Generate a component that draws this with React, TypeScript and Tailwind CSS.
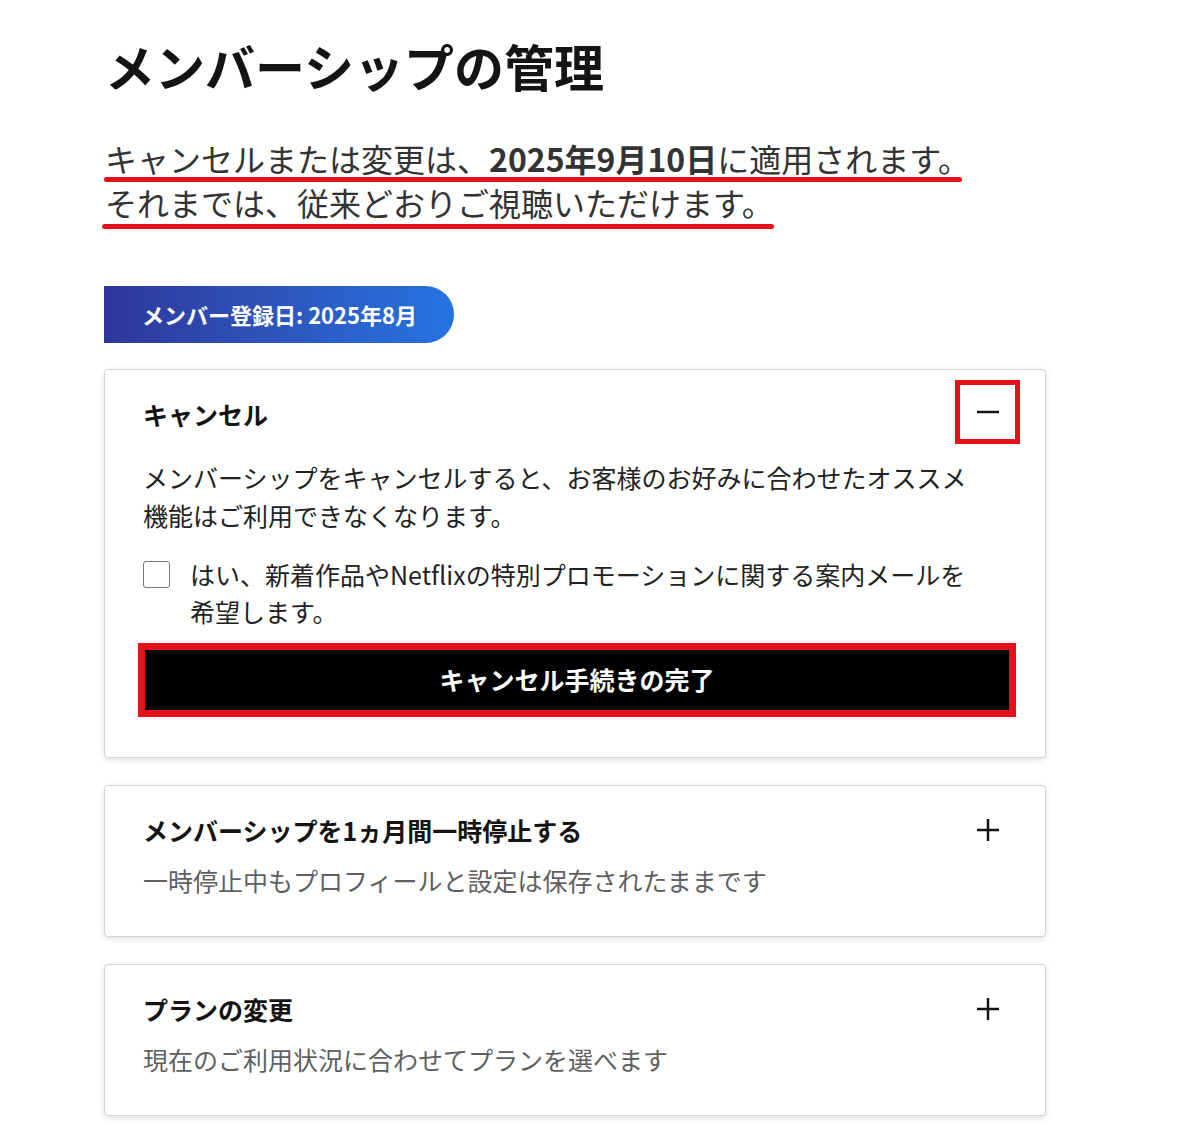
import React, { useState } from 'react';

// ==================== ICONS ====================
const PlusIcon = () => (
  <svg width="24" height="24" viewBox="0 0 24 24" fill="none">
    <path d="M12 1v22M1 12h22" stroke="#141414" strokeWidth="2.5" />
  </svg>
);

const MinusIcon = () => (
  <svg width="24" height="24" viewBox="0 0 24 24" fill="none">
    <path d="M1 12h22" stroke="#141414" strokeWidth="2.5" />
  </svg>
);

// ==================== OPTION CARD ====================
const OptionCard = ({ title, description }: { title: string; description: string }) => {
  return (
    <div className="border border-[#d4d4d4] rounded-[4px] bg-white shadow-[0_2px_6px_rgba(0,0,0,0.12)] pl-[38px] pr-[45px] pt-[26px] pb-[38px]">
      <div className="flex items-center justify-between">
        <h3 className="text-[25px] leading-[36px] font-bold text-[#141414]">{title}</h3>
        <PlusIcon />
      </div>
      <p className="mt-[14px] text-[25px] leading-[36px] text-[#5f5f5f]">{description}</p>
    </div>
  );
};

// ==================== MAIN COMPONENT ====================
export default function App() {
  const [wantsMail, setWantsMail] = useState(false);

  return (
    <div className="min-h-screen bg-white font-['Noto_Sans_CJK_JP','Noto_Sans',sans-serif] text-[#141414]">
      <main className="pl-[104px] pt-[35px] pb-[16px] w-[1046px]">
        <h1 className="text-[50px] leading-[60px] font-bold pl-[1px]">メンバーシップの管理</h1>

        {/* 注意書き（赤線つき） */}
        <div className="mt-[43px] text-[32px] text-[#333]">
          <div className="leading-[40px] pl-[1px]">
            キャンセルまたは変更は、<span className="font-bold">2025年9月10日</span>に適用されます。
          </div>
          <div className="mt-[-1px] h-[5px] w-[858px] rounded-full bg-[#e5121b]" />
          <div className="leading-[40px] pl-[1px]">それまでは、従来どおりご視聴いただけます。</div>
          <div className="ml-[-2px] mt-[2px] h-[5px] w-[672px] rounded-full bg-[#e5121b]" />
        </div>

        <div className="mt-[57px] flex h-[57px] w-[350px] items-center rounded-r-full bg-linear-to-r from-[#2e3799] to-[#2474e2] pl-[38px] text-[22px] font-bold text-white">
          メンバー登録日: 2025年8月
        </div>

        <div className="mt-[26px] flex flex-col gap-[27px]">
          {/* キャンセル (展開中) */}
          <div className="border border-[#d4d4d4] rounded-[4px] bg-white shadow-[0_2px_6px_rgba(0,0,0,0.12)] pl-[38px] pr-[25px] pt-[10px] pb-[40px]">
            <div className="flex items-center justify-between">
              <h3 className="text-[25px] leading-[36px] font-bold pt-[4px]">キャンセル</h3>
              <button className="flex h-[64px] w-[65px] items-center justify-center border-[5px] border-[#e5121b]">
                <MinusIcon />
              </button>
            </div>

            <p className="mt-[14px] w-[835px] text-[25px] leading-[38px] text-[#222]">
              メンバーシップをキャンセルすると、お客様のお好みに合わせたオススメ機能はご利用できなくなります。
            </p>

            <label className="mt-[22px] flex items-start gap-[20px] cursor-pointer">
              <input
                type="checkbox"
                checked={wantsMail}
                onChange={(e) => setWantsMail(e.target.checked)}
                className="mt-[5px] h-[27px] w-[27px] shrink-0 appearance-none rounded-[3px] border-[1.5px] border-[#777] bg-white"
              />
              <span className="w-[788px] text-[25px] leading-[37px] text-[#222]">
                はい、新着作品やNetflixの特別プロモーションに関する案内メールを希望します。
              </span>
            </label>

            <div className="mt-[13px] ml-[-5px] w-[878px] border-[7px] border-[#e5121b]">
              <button className="flex h-[60px] w-full items-center justify-center bg-black text-[25px] font-bold text-white">
                キャンセル手続きの完了
              </button>
            </div>
          </div>

          <OptionCard
            title="メンバーシップを1ヵ月間一時停止する"
            description="一時停止中もプロフィールと設定は保存されたままです"
          />
          <OptionCard title="プランの変更" description="現在のご利用状況に合わせてプランを選べます" />
        </div>
      </main>
    </div>
  );
}
